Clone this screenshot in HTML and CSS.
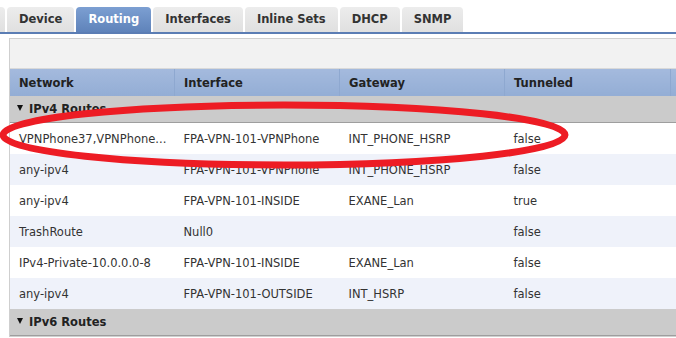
FILE: index.html
```html
<!DOCTYPE html>
<html lang="en">
<head>
    <meta charset="UTF-8">
    <title>Routing</title>
    <link rel="stylesheet" href="styles.css">
</head>
<body>
    <div class="tabs">
        <div class="tab tab-cut"></div>
        <div class="tab">Device</div>
        <div class="tab active">Routing</div>
        <div class="tab">Interfaces</div>
        <div class="tab">Inline Sets</div>
        <div class="tab">DHCP</div>
        <div class="tab">SNMP</div>
    </div>

    <div class="panel">
        <div class="toolbar"></div>
        <table class="grid">
            <thead>
                <tr>
                    <th>Network</th>
                    <th>Interface</th>
                    <th>Gateway</th>
                    <th>Tunneled</th>
                    <th class="filler"></th>
                </tr>
            </thead>
            <tbody>
                <tr class="group">
                    <td colspan="5"><span class="caret"></span>IPv4 Routes</td>
                </tr>
                <tr>
                    <td>VPNPhone37,VPNPhone...</td>
                    <td>FPA-VPN-101-VPNPhone</td>
                    <td>INT_PHONE_HSRP</td>
                    <td>false</td>
                    <td class="filler"></td>
                </tr>
                <tr class="alt">
                    <td>any-ipv4</td>
                    <td>FPA-VPN-101-VPNPhone</td>
                    <td>INT_PHONE_HSRP</td>
                    <td>false</td>
                    <td class="filler"></td>
                </tr>
                <tr>
                    <td>any-ipv4</td>
                    <td>FPA-VPN-101-INSIDE</td>
                    <td>EXANE_Lan</td>
                    <td>true</td>
                    <td class="filler"></td>
                </tr>
                <tr class="alt">
                    <td>TrashRoute</td>
                    <td>Null0</td>
                    <td></td>
                    <td>false</td>
                    <td class="filler"></td>
                </tr>
                <tr>
                    <td>IPv4-Private-10.0.0.0-8</td>
                    <td>FPA-VPN-101-INSIDE</td>
                    <td>EXANE_Lan</td>
                    <td>false</td>
                    <td class="filler"></td>
                </tr>
                <tr class="alt">
                    <td>any-ipv4</td>
                    <td>FPA-VPN-101-OUTSIDE</td>
                    <td>INT_HSRP</td>
                    <td>false</td>
                    <td class="filler"></td>
                </tr>
                <tr class="group">
                    <td colspan="5"><span class="caret"></span>IPv6 Routes</td>
                </tr>
            </tbody>
        </table>
    </div>

    <!-- hand-drawn highlight over the first route -->
    <svg class="mark" width="676" height="338" viewBox="0 0 676 338">
        <ellipse cx="284" cy="135" rx="281" ry="30" fill="none" stroke="#ed1c24" stroke-width="7"/>
    </svg>
</body>
</html>
```

FILE: styles.css
```css
body {
    font-family: "DejaVu Sans", Verdana, sans-serif;
    font-size: 11.5px;
    color: #333;
    background: #fff;
    margin: 0;
    width: 676px;
    height: 338px;
    overflow: hidden;
    position: relative;
}
.tabs {
    display: flex;
    gap: 2px;
    padding-top: 7px;
    border-bottom: 2px solid #5b7db4;
}
.tab {
    height: 25px;
    line-height: 25px;
    padding: 0 12px;
    font-size: 11.5px;
    font-weight: bold;
    color: #333;
    background: linear-gradient(#ececec, #e0e0e0);
    border-radius: 4px 4px 0 0;
}
.tab-cut {
    width: 5px;
    padding: 0;
    border-radius: 0 4px 0 0;
}
.tab.active {
    color: #fff;
    background: linear-gradient(#7c9fd2, #5f83ba);
}
.panel {
    margin: 4px 0 0 9px;
    border: 1px solid #cfcfcf;
    border-right: none;
}
.toolbar {
    height: 29px;
    background: #f2f2f2;
    border-bottom: 1px solid #d9d9d9;
}
.grid {
    width: 100%;
    border-collapse: collapse;
    table-layout: fixed;
}
.grid th {
    height: 27px;
    padding: 0 9px;
    text-align: left;
    font-weight: bold;
    color: #222;
    background: linear-gradient(#a4badd, #93add5);
    border-right: 1px solid #8ea8d0;
}
.grid th:nth-child(1),
.grid th:nth-child(2),
.grid th:nth-child(3) {
    width: 146px;
}
.grid th:nth-child(4) {
    width: 147px;
}
.grid th.filler,
.grid td.filler {
    padding: 0;
    border-right: none;
}
.grid td {
    height: 31px;
    padding: 0 9px;
    white-space: nowrap;
    overflow: hidden;
}
.grid tr.alt td {
    background: #eff2fa;
}
.grid tr.group td {
    height: 26px;
    padding-left: 7px;
    font-weight: bold;
    color: #222;
    background: #cbcbcb;
    border-bottom: 1px solid #9e9e9e;
}
.caret {
    display: inline-block;
    width: 0;
    height: 0;
    margin-right: 6px;
    vertical-align: 2px;
    border-left: 3.5px solid transparent;
    border-right: 3.5px solid transparent;
    border-top: 6px solid #111;
}
.mark {
    position: absolute;
    left: 0;
    top: 0;
    pointer-events: none;
}
```
